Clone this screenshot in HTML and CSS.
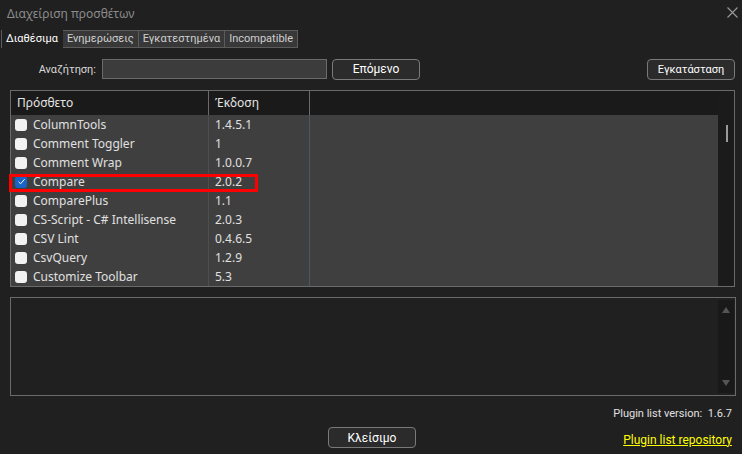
FILE: index.html
```html
<!DOCTYPE html>
<html lang="el">
<head>
    <meta charset="UTF-8">
    <title>Διαχείριση προσθέτων</title>
    <link rel="stylesheet" href="styles.css">
</head>
<body>

<div class="window">
    <div class="titlebar">
        <span class="title">Διαχείριση προσθέτων</span>
        <svg class="close" width="11" height="11" viewBox="0 0 11 11">
            <path d="M0.5 0.5 L10.5 10.5 M10.5 0.5 L0.5 10.5" stroke="#9a9a9a" stroke-width="1.1" fill="none"/>
        </svg>
    </div>

    <div class="tabs">
        <div class="tab active">Διαθέσιμα</div>
        <div class="tab">Ενημερώσεις</div>
        <div class="tab">Εγκατεστημένα</div>
        <div class="tab">Incompatible</div>
    </div>

    <div class="search-row">
        <label class="search-label">Αναζήτηση:</label>
        <div class="search-input"></div>
        <button class="btn btn-next">Επόμενο</button>
        <button class="btn btn-install">Εγκατάσταση</button>
    </div>

    <div class="list">
        <div class="list-main">
            <div class="list-head">
                <div class="col col-name">Πρόσθετο</div>
                <div class="col col-ver">Έκδοση</div>
                <div class="col col-rest"></div>
            </div>
            <div class="list-body" id="list-body"></div>
        </div>
        <div class="vscroll">
            <div class="thumb"></div>
        </div>
        <div class="highlight"></div>
    </div>

    <div class="desc">
        <div class="desc-text"></div>
        <div class="desc-scroll">
            <span class="arrow up"></span>
            <span class="arrow down"></span>
        </div>
    </div>

    <div class="footer">
        <div class="version">Plugin list version:&nbsp;&nbsp;1.6.7</div>
        <div class="footer-row">
            <div></div>
            <button class="btn btn-close">Κλείσιμο</button>
            <a class="repo-link" href="#">Plugin list repository</a>
        </div>
    </div>
</div>

<script>
    const plugins = [
        { name: "ColumnTools", version: "1.4.5.1" },
        { name: "Comment Toggler", version: "1" },
        { name: "Comment Wrap", version: "1.0.0.7" },
        { name: "Compare", version: "2.0.2", checked: true },
        { name: "ComparePlus", version: "1.1" },
        { name: "CS-Script - C# Intellisense", version: "2.0.3" },
        { name: "CSV Lint", version: "0.4.6.5" },
        { name: "CsvQuery", version: "1.2.9" },
        { name: "Customize Toolbar", version: "5.3" }
    ];

    const body = document.getElementById("list-body");
    plugins.forEach(p => {
        const row = document.createElement("div");
        row.classList.add("row");
        row.innerHTML = `
            <div class="col col-name">
                <span class="check ${p.checked ? "checked" : ""}">${p.checked ? '<svg width="9" height="9" viewBox="0 0 9 9"><path d="M1.5 4.8 L3.6 6.8 L7.6 2.2" stroke="#fff" stroke-width="1" fill="none"/></svg>' : ""}</span>
                ${p.name}
            </div>
            <div class="col col-ver">${p.version}</div>
            <div class="col col-rest"></div>
        `;
        body.appendChild(row);
    });
</script>

</body>
</html>
```

FILE: styles.css
```css
body {
    margin: 0;
    background: #202020;
    font-family: "Noto Sans", "Open Sans", sans-serif;
    font-size: 12px;
    color: #e0e0e0;
}

.window {
    width: 742px;
    height: 454px;
    overflow: hidden;
}

.titlebar {
    height: 26px;
    display: flex;
    justify-content: space-between;
    align-items: center;
    padding: 0 4px 0 7px;
}
.title {
    color: #8c8c8c;
    font-size: 12px;
}
.close {
    margin-top: -1px;
}

.tabs {
    display: flex;
    margin-top: 4px;
    height: 18px;
    font-family: Roboto, sans-serif;
    font-size: 11px;
}
.tab {
    background: #383838;
    border: 1px solid #5c5c5c;
    border-left: none;
    color: #cfcfcf;
    padding: 0 4px;
    line-height: 16px;
    height: 16px;
}
.tab.active {
    background: #202020;
    color: #ffffff;
    border: none;
    border-left: 1px solid #5c5c5c;
    margin-left: 1px;
    padding: 0 5px 0 4px;
    height: 18px;
    line-height: 17px;
}

.search-row {
    display: flex;
    align-items: center;
    margin-top: 10px;
    height: 22px;
    font-family: Roboto, sans-serif;
}
.search-label {
    width: 96px;
    text-align: right;
    color: #d8d8d8;
    font-size: 11px;
}
.search-input {
    width: 223px;
    height: 18px;
    margin-left: 6px;
    background: #3c3c3c;
    border: 1px solid #6a6a6a;
}
.btn {
    font-family: Roboto, sans-serif;
    font-size: 12px;
    color: #ffffff;
    background: #2b2b2b;
    border: 1px solid #7a7a7a;
    border-radius: 4px;
    height: 21px;
    padding: 0;
}
.btn-next {
    width: 88px;
    margin-left: 5px;
}
.btn-install {
    width: 88px;
    margin-left: auto;
    margin-right: 7px;
    font-size: 11px;
}

.list {
    position: relative;
    display: flex;
    margin: 10px 7px 0 10px;
    height: 195px;
    border: 1px solid #6a6a6a;
}
.list-main {
    flex: 1;
    display: flex;
    flex-direction: column;
}
.list-head {
    display: flex;
    height: 24px;
    background: #1a1a1a;
}
.list-head .col {
    line-height: 24px;
    padding-left: 6px;
    color: #e4e4e4;
}
.list-head .col-name {
    border-right: 1px solid #6a6a6a;
}
.list-head .col-ver {
    border-right: 1px solid #6a6a6a;
}
.col-name {
    width: 191px;
}
.col-ver {
    width: 94px;
}
.col-rest {
    flex: 1;
}
.list-body {
    flex: 1;
    background: #3f3f3f;
}
.row {
    display: flex;
    height: 19px;
    line-height: 19px;
}
.row .col-name {
    display: flex;
    align-items: center;
    gap: 6px;
    padding-left: 4px;
    width: 193px;
    border-right: 1px solid #4e4e4e;
}
.row .col-ver {
    padding-left: 6px;
    border-right: 1px solid #4a5966;
}
.check {
    width: 12px;
    height: 12px;
    border-radius: 3px;
    background: #f2f2f2;
    display: flex;
    align-items: center;
    justify-content: center;
}
.check.checked {
    background: #1863c6;
}
.vscroll {
    width: 16px;
    background: #1b1b1b;
    position: relative;
}
.thumb {
    position: absolute;
    left: 8px;
    top: 34px;
    width: 2px;
    height: 17px;
    background: #9a9a9a;
}
.highlight {
    position: absolute;
    left: -2px;
    top: 83px;
    width: 243px;
    height: 12px;
    border: 3px solid #ff0000;
}

.desc {
    display: flex;
    margin: 10px 6px 0 10px;
    height: 97px;
    border: 1px solid #6a6a6a;
}
.desc-text {
    flex: 1;
}
.desc-scroll {
    width: 16px;
    margin: 2px 1px 2px 0;
    background: #191919;
    display: flex;
    flex-direction: column;
    justify-content: space-between;
    align-items: center;
    padding: 7px 0;
}
.arrow {
    width: 0;
    height: 0;
    border-left: 4px solid transparent;
    border-right: 4px solid transparent;
}
.arrow.up {
    border-bottom: 6px solid #555555;
}
.arrow.down {
    border-top: 6px solid #555555;
}

.footer {
    padding: 11px 10px 0 0;
    font-family: Roboto, sans-serif;
}
.version {
    text-align: right;
    color: #e0e0e0;
    height: 16px;
    font-size: 11px;
}
.footer-row {
    display: grid;
    grid-template-columns: 1fr auto 1fr;
    align-items: center;
    margin-top: 4px;
    padding-left: 12px;
}
.btn-close {
    width: 88px;
}
.repo-link {
    justify-self: end;
    color: #ffff00;
    margin-top: 4px;
}
```
